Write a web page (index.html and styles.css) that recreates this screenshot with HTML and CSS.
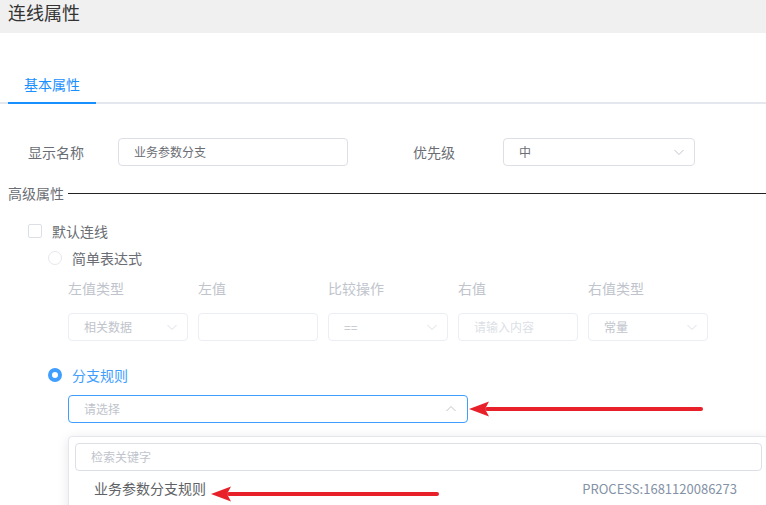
FILE: index.html
```html
<!DOCTYPE html>
<html lang="zh-CN">
<head>
    <meta charset="UTF-8">
    <title>连线属性</title>
    <link rel="stylesheet" href="styles.css">
</head>
<body>
    <div class="page">
        <div class="header">连线属性</div>

        <div class="tabs">
            <div class="tab active">基本属性</div>
        </div>

        <div class="form-row">
            <div class="field">
                <label class="field-label">显示名称</label>
                <div class="input name-input">业务参数分支</div>
            </div>
            <div class="field">
                <label class="field-label">优先级</label>
                <div class="input select priority-input">
                    <span>中</span>
                    <svg class="chevron" viewBox="0 0 12 12"><path d="M1.5 4 L6 8.5 L10.5 4"/></svg>
                </div>
            </div>
        </div>

        <div class="section-title">高级属性</div>

        <div class="check-row">
            <span class="checkbox"></span>
            <span>默认连线</span>
        </div>

        <div class="radio-row">
            <span class="radio"></span>
            <span>简单表达式</span>
        </div>

        <div class="expr-grid">
            <div class="expr-label">左值类型</div>
            <div class="expr-label">左值</div>
            <div class="expr-label">比较操作</div>
            <div class="expr-label">右值</div>
            <div class="expr-label">右值类型</div>

            <div class="input select disabled"><span>相关数据</span><svg class="chevron" viewBox="0 0 12 12"><path d="M1.5 4 L6 8.5 L10.5 4"/></svg></div>
            <div class="input disabled"></div>
            <div class="input select disabled"><span>==</span><svg class="chevron" viewBox="0 0 12 12"><path d="M1.5 4 L6 8.5 L10.5 4"/></svg></div>
            <div class="input disabled"><span class="placeholder">请输入内容</span></div>
            <div class="input select disabled"><span>常量</span><svg class="chevron" viewBox="0 0 12 12"><path d="M1.5 4 L6 8.5 L10.5 4"/></svg></div>
        </div>

        <div class="radio-row checked-row">
            <span class="radio checked"></span>
            <span>分支规则</span>
        </div>

        <div class="rule-select-wrap">
            <div class="input select focused">
                <span class="placeholder">请选择</span>
                <svg class="chevron up" viewBox="0 0 12 12"><path d="M1.5 8 L6 3.5 L10.5 8"/></svg>
            </div>
            <svg class="arrow arrow-top" viewBox="0 0 240 16"><path class="shaft" d="M18 8 H232"/><path class="head" d="M0 8 L20 0.5 L16 8 L20 15.5 Z"/></svg>
        </div>

        <div class="dropdown">
            <div class="input search">检索关键字</div>
            <div class="option">
                <span class="option-name">业务参数分支规则</span>
                <span class="option-code">PROCESS:1681120086273</span>
            </div>
            <svg class="arrow arrow-item" viewBox="0 0 240 16"><path class="shaft" d="M18 8 H226"/><path class="head" d="M0 8 L20 0.5 L16 8 L20 15.5 Z"/></svg>
        </div>
    </div>
</body>
</html>
```

FILE: styles.css
```css
* {
    box-sizing: border-box;
}

body {
    margin: 0;
    font-family: "Noto Sans CJK SC", "Liberation Sans", sans-serif;
    color: #6a6d73;
    background-color: #fff;
}

.page {
    width: 766px;
    height: 505px;
    overflow: hidden;
    position: relative;
}

.header {
    height: 33px;
    background-color: #f0f0f0;
    padding-left: 8px;
    font-size: 18px;
    line-height: 24px;
    color: #333;
}

.tabs {
    margin: 33px 0 0 0;
    padding-left: 8px;
    border-bottom: 2px solid #e4e7ed;
    display: flex;
}

.tab {
    width: 88px;
    height: 36px;
    line-height: 36px;
    text-align: center;
    font-size: 14px;
    margin-bottom: -2px;
}

.tab.active {
    color: #1890ff;
    border-bottom: 2px solid #1890ff;
    height: 38px;
}

.form-row {
    display: flex;
    margin-top: 34px;
    padding-left: 28px;
}

.field {
    display: flex;
    align-items: center;
}

.field + .field {
    margin-left: 65px;
}

.field-label {
    width: 90px;
    font-size: 14px;
    color: #6a6d73;
}

.input {
    height: 28px;
    border: 1px solid #dcdfe6;
    border-radius: 4px;
    font-size: 12px;
    line-height: 26px;
    padding: 0 15px;
    color: #6a6d73;
    background-color: #fff;
}

.select {
    display: flex;
    align-items: center;
    justify-content: space-between;
    padding-right: 9px;
}

.chevron {
    width: 12px;
    height: 12px;
    fill: none;
    stroke: #c0c4cc;
    stroke-width: 1;
}

.name-input {
    width: 230px;
}

.priority-input {
    width: 192px;
}

.section-title {
    display: flex;
    align-items: center;
    margin-top: 18px;
    padding-left: 8px;
    font-size: 14px;
    line-height: 18px;
    color: #6a6d73;
}

.section-title::after {
    content: "";
    flex: 1;
    height: 1px;
    background-color: #222;
    margin-left: 4px;
}

.check-row {
    display: flex;
    align-items: center;
    margin-top: 19px;
    padding-left: 28px;
    font-size: 14px;
    line-height: 20px;
}

.checkbox {
    width: 14px;
    height: 14px;
    border: 1px solid #dcdfe6;
    border-radius: 2px;
    margin-right: 10px;
}

.radio-row {
    display: flex;
    align-items: center;
    margin-top: 7px;
    padding-left: 48px;
    font-size: 14px;
    line-height: 20px;
}

.radio {
    width: 14px;
    height: 14px;
    border: 1px solid #e4e7ed;
    border-radius: 50%;
    margin-right: 10px;
}

.radio.checked {
    border: 4px solid #409eff;
    background-color: #fff;
}

.checked-row {
    margin-top: 24px;
    color: #409eff;
}

.expr-grid {
    display: grid;
    grid-template-columns: repeat(5, 120px);
    column-gap: 10px;
    row-gap: 16px;
    padding-left: 68px;
    margin-top: 11px;
}

.expr-label {
    font-size: 14px;
    line-height: 18px;
    color: #c0c4cc;
}

.input.disabled {
    border-color: #ebeef5;
    color: #c0c4cc;
}

.input.disabled .chevron {
    stroke: #dcdfe6;
}

.placeholder {
    color: #c0c4cc;
}

.input.disabled .placeholder {
    color: #dcdfe6;
}

.rule-select-wrap {
    position: relative;
    margin-top: 10px;
    padding-left: 68px;
}

.focused {
    width: 400px;
    border-color: #409eff;
}

.chevron.up {
    margin-right: 1px;
}

.arrow {
    position: absolute;
    height: 16px;
}

.arrow .shaft {
    stroke: #e8202a;
    stroke-width: 4;
    stroke-linecap: round;
}

.arrow .head {
    fill: #e8202a;
}

.arrow-top {
    left: 469px;
    top: 6px;
    width: 240px;
}

.dropdown {
    position: relative;
    width: 701px;
    margin: 13px 0 0 68px;
    padding: 6px;
    border: 1px solid #e4e7ed;
    border-radius: 4px;
    box-shadow: 0 2px 12px rgba(0, 0, 0, 0.1);
    background-color: #fff;
}

.search {
    color: #c0c4cc;
}

.option {
    display: flex;
    justify-content: space-between;
    align-items: center;
    height: 34px;
    padding: 0 25px 0 19px;
    font-size: 14px;
}

.option-name {
    color: #606266;
}

.option-code {
    font-size: 13px;
    color: #8492a6;
}

.arrow-item {
    left: 142px;
    top: 49px;
    width: 240px;
}
```
